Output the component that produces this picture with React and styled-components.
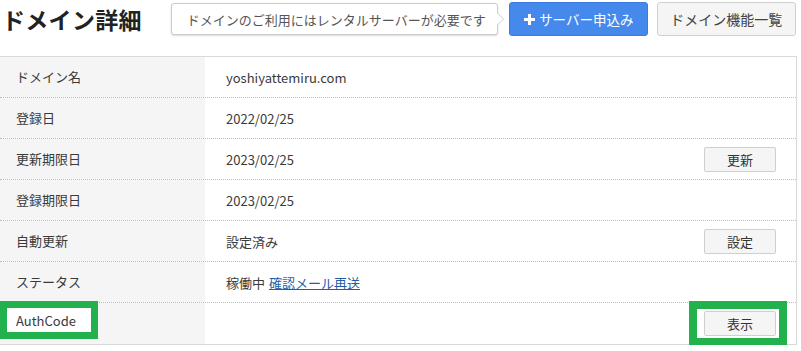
import React from "react";
import styled, { createGlobalStyle } from "styled-components";

const GlobalStyle = createGlobalStyle`
  body {
    margin: 0;
    background: #fff;
    font-family: "Noto Sans CJK JP", "Noto Sans", sans-serif;
    color: #333;
  }
`;

const Page = styled.div`
  width: 797px;
`;

const Header = styled.div`
  display: flex;
  align-items: center;
  height: 38px;
  margin-bottom: 18px;
`;

const Title = styled.h1`
  margin: 0 0 0 2px;
  font-size: 23px;
  font-weight: 700;
  color: #222;
  letter-spacing: 0.3px;
  white-space: nowrap;
`;

const Balloon = styled.div`
  position: relative;
  box-sizing: border-box;
  width: 327px;
  height: 32px;
  margin-left: 29px;
  padding-left: 15px;
  display: flex;
  align-items: center;
  border: 1px solid #ccc;
  border-radius: 3px;
  background: #fff;
  box-shadow: 0 1px 2px rgba(0, 0, 0, 0.15);
  font-size: 13px;
  color: #555;
  white-space: nowrap;
  &::before,
  &::after {
    content: "";
    position: absolute;
    top: 50%;
    transform: translateY(-50%);
    border-style: solid;
    border-color: transparent;
  }
  &::before {
    right: -7px;
    border-width: 7px 0 7px 7px;
    border-left-color: #ccc;
  }
  &::after {
    right: -6px;
    border-width: 6px 0 6px 6px;
    border-left-color: #fff;
  }
`;

const Button = styled.button`
  box-sizing: border-box;
  height: 34px;
  width: 139px;
  display: flex;
  align-items: center;
  justify-content: center;
  gap: 3px;
  border-radius: 3px;
  font-family: inherit;
  font-size: ${(p) => (p.$primary ? "13.5px" : "14px")};
  cursor: pointer;
  border: 1px solid ${(p) => (p.$primary ? "#3b7be0" : "#d0d0d0")};
  background: ${(p) => (p.$primary ? "#4689ec" : "#f5f5f5")};
  color: ${(p) => (p.$primary ? "#fff" : "#444")};
  margin-left: ${(p) => p.$gap}px;
`;

const Table = styled.div`
  border-top: 1px solid #d9d9d9;
  border-bottom: 1px solid #d9d9d9;
  border-right: 1px solid #d9d9d9;
`;

const Row = styled.div`
  display: grid;
  grid-template-columns: 205px 1fr;
  height: 41px;
  box-sizing: border-box;
  border-bottom: ${(p) => (p.$last ? "none" : "1px dotted #bdbdbd")};
`;

const Label = styled.div`
  position: relative;
  display: flex;
  align-items: center;
  padding: 0 0 2px 16px;
  background: #f5f5f5;
  font-size: 13px;
  color: #3a3a3a;
`;

const Value = styled.div`
  display: flex;
  align-items: center;
  justify-content: space-between;
  padding: 0 20px 0 21px;
  font-size: 13px;
  color: #3a3a3a;
`;

const Link = styled.a`
  margin-left: 4px;
  color: #1f5da6;
  text-decoration: underline;
`;

const SmallButton = styled.button`
  box-sizing: border-box;
  width: 72px;
  height: 25px;
  border: 1px solid #cfcfcf;
  border-radius: 2px;
  background: #f5f5f5;
  font-family: inherit;
  font-size: 13px;
  color: #333;
  cursor: pointer;
`;

const Marked = styled.span`
  position: relative;
  display: inline-flex;
`;

const Frame = styled.span`
  position: absolute;
  left: -15px;
  right: -11px;
  top: -10px;
  bottom: -10px;
  border: 8px solid #22b14c;
  pointer-events: none;
`;

const LabelFrame = styled.span`
  position: absolute;
  left: 0;
  top: -2px;
  width: 98px;
  height: 38px;
  box-sizing: border-box;
  border: 7px solid #22b14c;
  background: #fff;
  display: flex;
  align-items: center;
  padding-left: 9px;
`;

const PlusIcon = () => (
  <svg width="13" height="13" viewBox="0 0 13 13">
    <path d="M6.5 1v11M1 6.5h11" stroke="#fff" strokeWidth="3" />
  </svg>
);

const rows = [
  { label: "ドメイン名", value: "yoshiyattemiru.com" },
  { label: "登録日", value: "2022/02/25" },
  { label: "更新期限日", value: "2023/02/25", action: "更新" },
  { label: "登録期限日", value: "2023/02/25" },
  { label: "自動更新", value: "設定済み", action: "設定" },
  { label: "ステータス", value: "稼働中", link: "確認メール再送" },
];

export default function App() {
  return (
    <Page>
      <GlobalStyle />
      <Header>
        <Title>ドメイン詳細</Title>
        <Balloon>ドメインのご利用にはレンタルサーバーが必要です</Balloon>
        <Button $primary $gap={11}>
          <PlusIcon />
          サーバー申込み
        </Button>
        <Button $gap={9}>ドメイン機能一覧</Button>
      </Header>
      <Table>
        {rows.map((r) => (
          <Row key={r.label}>
            <Label>{r.label}</Label>
            <Value>
              <span>
                {r.value}
                {r.link && <Link href="#">{r.link}</Link>}
              </span>
              {r.action && <SmallButton>{r.action}</SmallButton>}
            </Value>
          </Row>
        ))}
        <Row $last>
          <Label>
            <LabelFrame>AuthCode</LabelFrame>
          </Label>
          <Value>
            <span />
            <Marked>
              <SmallButton>表示</SmallButton>
              <Frame />
            </Marked>
          </Value>
        </Row>
      </Table>
    </Page>
  );
}
